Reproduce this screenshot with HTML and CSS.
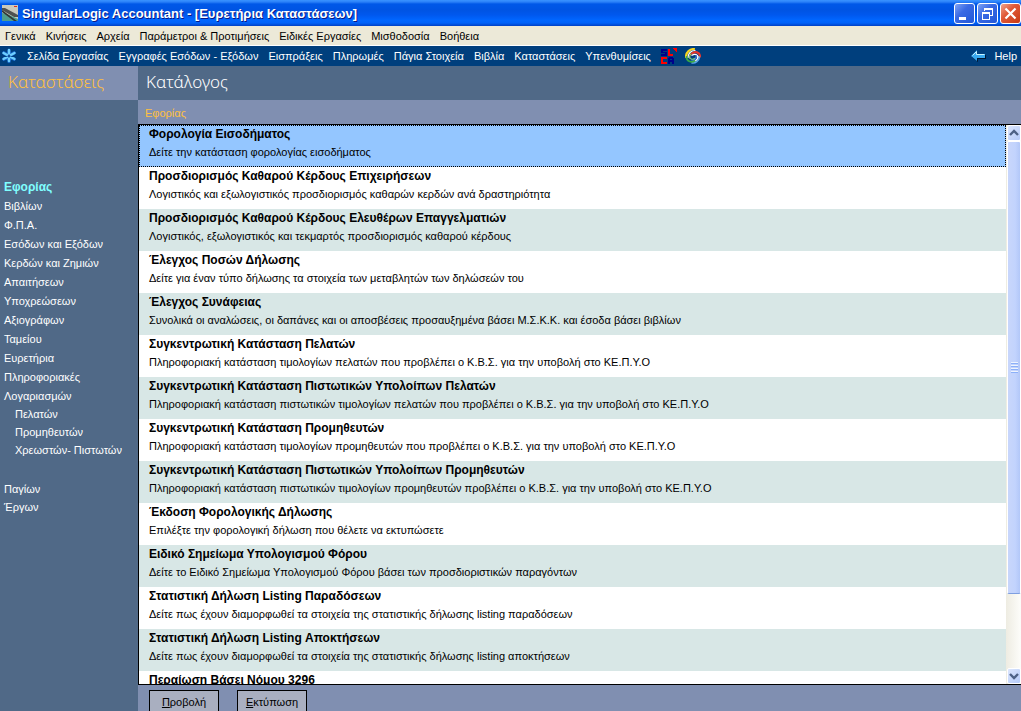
FILE: index.html
```html
<!DOCTYPE html>
<html lang="el">
<head>
<meta charset="utf-8">
<title>SingularLogic Accountant - [Ευρετήρια Καταστάσεων]</title>
<link rel="stylesheet" href="styles.css">
</head>
<body>
<div class="window">
  <header class="titlebar">
    <svg class="app-icon" viewBox="0 0 16 16" aria-hidden="true">
      <rect width="16" height="16" fill="#c9c9bd"/>
      <path d="M0 3h3l13 7v2H12L0 5z" fill="#4f5250"/>
      <path d="M0 8l5 1 11 5v2H0z" fill="#4f9d8e"/>
      <path d="M0 5l15 11h-3L0 7z" fill="#343836"/>
      <path d="M12 1h3v1h-3z" fill="#e02a20"/>
    </svg>
    <h1 class="title">SingularLogic Accountant - [Ευρετήρια Καταστάσεων]</h1>
    <div class="window-buttons">
      <button class="wbtn" type="button" aria-label="Ελαχιστοποίηση"><svg viewBox="0 0 19 19"><path d="M4 13h7v3H4z" fill="#fff"/></svg></button>
      <button class="wbtn" type="button" aria-label="Επαναφορά"><svg viewBox="0 0 19 19"><path d="M6 4h9v8h-3v-1h2V6H7v1H6z" fill="#fff"/><path d="M4 8h8v8H4zm1 2v5h6v-5z" fill="#fff" fill-rule="evenodd"/></svg></button>
      <button class="wbtn wbtn-close" type="button" aria-label="Κλείσιμο"><svg viewBox="0 0 19 19"><path d="M4.500 4.500l10 10M14.500 4.500l-10 10" stroke="#fff" stroke-width="2.200"/></svg></button>
    </div>
  </header>
  <nav class="menubar" aria-label="Μενού">
    <button type="button">Γενικά</button>
    <button type="button">Κινήσεις</button>
    <button type="button">Αρχεία</button>
    <button type="button">Παράμετροι &amp; Προτιμήσεις</button>
    <button type="button">Ειδικές Εργασίες</button>
    <button type="button">Μισθοδοσία</button>
    <button type="button">Βοήθεια</button>
  </nav>
  <nav class="toolbar" aria-label="Εργαλεία">
    <svg class="star" viewBox="0 0 16 16" aria-hidden="true">
      <g stroke-linecap="round"><path d="M8 2.500v11M3 5l10 6M3 11l10-6" stroke="#1565c8" stroke-width="3.600"/><path d="M8 2v11M2.500 5l11 6M2.500 11l11-6" stroke="#6fd0ff" stroke-width="2.400"/></g>
      <path d="M7.300 6.600h1.400l.8 1.400-.8 1.400H7.300L6.500 8z" fill="#12509c"/>
    </svg>
    <a href="#">Σελίδα Εργασίας</a>
    <a href="#">Εγγραφές Εσόδων - Εξόδων</a>
    <a href="#">Εισπράξεις</a>
    <a href="#">Πληρωμές</a>
    <a href="#">Πάγια Στοιχεία</a>
    <a href="#">Βιβλία</a>
    <a href="#">Καταστάσεις</a>
    <a href="#">Υπενθυμίσεις</a>
    <div class="tools">
      <button class="tool" type="button" aria-label="SLCA">
        <svg viewBox="0 0 16 16" shape-rendering="crispEdges"><path d="M0 1h6v2H2v1h4v4H0V6h4V5H0z" fill="#00008b"/><path d="M7 1h2v5h3v2H7z" fill="#f00"/><path d="M0 9h6v2H2v3h4v2H0z" fill="#f00"/><path d="M7 16v-6h1V9h4v1h1v6h-2v-2H9v2zM9 11h2v1H9z" fill="#00008b" fill-rule="evenodd"/><path d="M12 0h4v4h-1V3h-1V2h-1V1h-1z" fill="#f00"/></svg>
      </button>
      <button class="tool" type="button" aria-label="Swirl">
        <svg viewBox="0 0 16 16"><g fill="none" stroke-linecap="round">
          <path d="M1 9C1 4 5 1 9 1" stroke="#f6d51f" stroke-width="2.200"/><path d="M3 9.500c0-4 3-7 7-7" stroke="#fff" stroke-width="1.200"/><path d="M4.500 10c0-3 2-5.500 5.500-6" stroke="#b7c93a" stroke-width="1.200"/>
          <path d="M7 5.500c3-2.500 8-1.500 8 3" stroke="#e5352b" stroke-width="2.200"/><path d="M7 7.300c3-2 6-.5 6 2" stroke="#fff" stroke-width="1.200"/>
          <path d="M14.500 9c-.5 4-4 6.500-7.500 6" stroke="#58a5e8" stroke-width="1.600"/><path d="M13 8.500c0 3-3 5.500-6 5" stroke="#fff" stroke-width="1.200"/><path d="M11.300 8c0 3-2 4.500-4.500 4" stroke="#3b74d8" stroke-width="1.500"/>
          <path d="M9.500 13C6 15 1.500 13 1.500 9" stroke="#39a845" stroke-width="1.800"/><path d="M9.500 10.500c-2 1.500-5 .5-5-2" stroke="#7ecf7e" stroke-width="1.200"/></g></svg>
      </button>
    </div>
    <a class="help" href="#"><svg viewBox="0 0 15 12" aria-hidden="true"><path d="M1 7l6 5V9h8V5z" fill="#001630"/><path d="M0 6l6-6v4h8v4H6v3z" fill="#39a9f0"/><path d="M1.500 5.500L5.500 1.500v3h8" fill="none" stroke="#c8f4ff"/></svg>Help</a>
  </nav>
  <div class="workspace">
    <aside class="sidebar">
      <h2 class="heading sidebar-heading">Καταστάσεις</h2>
      <nav class="side-nav" aria-label="Καταστάσεις">
        <ul>
          <li><a class="current" href="#" aria-current="page">Εφορίας</a></li>
          <li><a href="#">Βιβλίων</a></li>
          <li><a href="#">Φ.Π.Α.</a></li>
          <li><a href="#">Εσόδων και Εξόδων</a></li>
          <li><a href="#">Κερδών και Ζημιών</a></li>
          <li><a href="#">Απαιτήσεων</a></li>
          <li><a href="#">Υποχρεώσεων</a></li>
          <li><a href="#">Αξιογράφων</a></li>
          <li><a href="#">Ταμείου</a></li>
          <li><a href="#">Ευρετήρια</a></li>
          <li><a href="#">Πληροφοριακές</a></li>
        </ul>
        <ul class="tight">
          <li><a href="#">Λογαριασμών</a>
            <ul class="nested">
              <li><a href="#">Πελατών</a></li>
              <li><a href="#">Προμηθευτών</a></li>
              <li><a href="#">Χρεωστών- Πιστωτών</a></li>
            </ul>
          </li>
        </ul>
        <ul class="tight last">
          <li><a href="#">Παγίων</a></li>
          <li><a href="#">Έργων</a></li>
        </ul>
      </nav>
    </aside>
    <main class="content">
      <h2 class="heading content-heading">Κατάλογος</h2>
      <h3 class="subheading">Εφορίας</h3>
      <div class="list-frame">
        <ul class="list" role="listbox" aria-label="Εφορίας">
          <li class="row selected" role="option" aria-selected="true"><strong>Φορολογία Εισοδήματος</strong><span>Δείτε την κατάσταση φορολογίας εισοδήματος</span></li>
          <li class="row" role="option"><strong>Προσδιορισμός Καθαρού Κέρδους Επιχειρήσεων</strong><span>Λογιστικός και εξωλογιστικός προσδιορισμός καθαρών κερδών ανά δραστηριότητα</span></li>
          <li class="row" role="option"><strong>Προσδιορισμός Καθαρού Κέρδους Ελευθέρων Επαγγελματιών</strong><span>Λογιστικός, εξωλογιστικός και τεκμαρτός προσδιορισμός καθαρού κέρδους</span></li>
          <li class="row" role="option"><strong>Έλεγχος Ποσών Δήλωσης</strong><span>Δείτε για έναν τύπο δήλωσης τα στοιχεία των μεταβλητών των δηλώσεών του</span></li>
          <li class="row" role="option"><strong>Έλεγχος Συνάφειας</strong><span>Συνολικά οι αναλώσεις, οι δαπάνες και οι αποσβέσεις προσαυξημένα βάσει Μ.Σ.Κ.Κ. και έσοδα βάσει βιβλίων</span></li>
          <li class="row" role="option"><strong>Συγκεντρωτική Κατάσταση Πελατών</strong><span>Πληροφοριακή κατάσταση τιμολογίων πελατών που προβλέπει ο Κ.Β.Σ. για την υποβολή στο ΚΕ.Π.Υ.Ο</span></li>
          <li class="row" role="option"><strong>Συγκεντρωτική Κατάσταση Πιστωτικών Υπολοίπων Πελατών</strong><span>Πληροφοριακή κατάσταση πιστωτικών τιμολογίων πελατών που προβλέπει ο Κ.Β.Σ. για την υποβολή στο ΚΕ.Π.Υ.Ο</span></li>
          <li class="row" role="option"><strong>Συγκεντρωτική Κατάσταση Προμηθευτών</strong><span>Πληροφοριακή κατάσταση τιμολογίων προμηθευτών που προβλέπει ο Κ.Β.Σ. για την υποβολή στο ΚΕ.Π.Υ.Ο</span></li>
          <li class="row" role="option"><strong>Συγκεντρωτική Κατάσταση Πιστωτικών Υπολοίπων Προμηθευτών</strong><span>Πληροφοριακή κατάσταση πιστωτικών τιμολογίων προμηθευτών προβλέπει ο Κ.Β.Σ. για την υποβολή στο ΚΕ.Π.Υ.Ο</span></li>
          <li class="row" role="option"><strong>Έκδοση Φορολογικής Δήλωσης</strong><span>Επιλέξτε την φορολογική δήλωση που θέλετε να εκτυπώσετε</span></li>
          <li class="row" role="option"><strong>Ειδικό Σημείωμα Υπολογισμού Φόρου</strong><span>Δείτε το Ειδικό Σημείωμα Υπολογισμού Φόρου βάσει των προσδιοριστικών παραγόντων</span></li>
          <li class="row" role="option"><strong>Στατιστική Δήλωση Listing Παραδόσεων</strong><span>Δείτε πως έχουν διαμορφωθεί τα στοιχεία της στατιστικής δήλωσης listing παραδόσεων</span></li>
          <li class="row" role="option"><strong>Στατιστική Δήλωση Listing Αποκτήσεων</strong><span>Δείτε πως έχουν διαμορφωθεί τα στοιχεία της στατιστικής δήλωσης listing αποκτήσεων</span></li>
          <li class="row" role="option"><strong>Περαίωση Βάσει Νόμου 3296</strong></li>
        </ul>
        <div class="scrollbar">
          <button class="scroll-btn" type="button" aria-label="Πάνω"><svg viewBox="0 0 12 14"><path d="M2 9l4-4 4 4" fill="none" stroke="#4d6185" stroke-width="2.400"/></svg></button>
          <div class="track"><div class="thumb"><i></i><i></i><i></i><i></i></div></div>
          <button class="scroll-btn" type="button" aria-label="Κάτω"><svg viewBox="0 0 12 14"><path d="M2 5l4 4 4-4" fill="none" stroke="#4d6185" stroke-width="2.400"/></svg></button>
        </div>
      </div>
      <footer class="actions">
        <button type="button"><u>Π</u>ροβολή</button>
        <button type="button"><u>Ε</u>κτύπωση</button>
      </footer>
    </main>
  </div>
</div>
</body>
</html>
```
FILE: styles.css
```css
* { box-sizing: border-box; }
body {
  margin: 0;
  font-family: "Liberation Sans", Arial, sans-serif;
  font-size: 11px;
  color: #000;
}
button { font: inherit; color: inherit; padding: 0; border: 0; background: none; }
a { color: inherit; text-decoration: none; }
ul { list-style: none; margin: 0; padding: 0; }
h1, h2, h3 { margin: 0; font-weight: normal; }
svg { display: block; }

.window { display: flex; flex-direction: column; height: 100vh; overflow: hidden; }

.titlebar {
  flex: none;
  display: flex;
  align-items: center;
  gap: 4px;
  height: 26px;
  padding-left: 2px;
  background: linear-gradient(#3a93ff 0, #2a80f8 2px, #0058e8 4px, #0054e3 10px, #0058ee 15px, #0066ff 20px, #0062f8 23px, #0040c4 26px);
}
.app-icon { width: 16px; height: 16px; }
.title { flex: 1; font-size: 13px; font-weight: bold; color: #fff; text-shadow: 1px 1px #0a1883; white-space: nowrap; }
.window-buttons { display: flex; gap: 2px; }
.wbtn {
  width: 21px;
  height: 21px;
  border: 1px solid #fff;
  border-radius: 3px;
  background: linear-gradient(135deg, #7ea3f5, #3a6ae4 40%, #2257d8);
}
.wbtn svg { width: 19px; height: 19px; }
.wbtn-close { background: linear-gradient(135deg, #f0a38c, #e05a38 40%, #c83a14); }

.menubar {
  flex: none;
  display: flex;
  align-items: center;
  gap: 10px;
  height: 20px;
  padding-left: 5px;
  background: #ece9d8;
  border-bottom: 1px solid #fff;
}
.toolbar {
  flex: none;
  display: flex;
  align-items: center;
  gap: 10px;
  height: 20px;
  padding: 0 4px 0 1px;
  background: #003f7d;
  color: #fff;
  white-space: nowrap;
}
.star { width: 16px; height: 16px; }
.tools { display: flex; gap: 8px; }
.tool svg { width: 16px; height: 16px; }
.help { display: flex; align-items: center; gap: 8px; margin-left: auto; }
.help svg { width: 15px; height: 12px; }

.workspace { flex: 1; display: flex; min-height: 0; }
.sidebar { flex: none; width: 138px; background: #506987; color: #fff; }
.heading { height: 34px; font-family: "Noto Sans", sans-serif; font-size: 17px; line-height: 32px; font-weight: 300; }
.sidebar-heading { padding-left: 8px; background: #808fb1; color: #ffc040; }
.side-nav { padding: 78px 0 0 4px; line-height: 19px; white-space: nowrap; }
.tight { line-height: 18px; }
.last { padding-top: 21px; }
.nested { padding-left: 11px; }
.current { color: #80ffff; font-size: 12px; font-weight: bold; }

.content { flex: 1; display: flex; flex-direction: column; min-width: 0; background: #808fb1; }
.content-heading { flex: none; padding-left: 8px; background: #506987; color: #fff; }
.subheading { flex: none; height: 24px; padding-left: 7px; font-size: 11px; line-height: 26px; color: #ffc040; }
.list-frame {
  flex: 1;
  display: flex;
  min-height: 0;
  background: #fff;
  border: solid #000;
  border-width: 1px 0 1px 1px;
}
.list { flex: 1; overflow: hidden; }
.row { height: 42px; padding: 0 10px; line-height: 18px; white-space: nowrap; }
.row:nth-child(odd) { background: #d8e7e6; }
.row strong, .row span { display: block; }
.row strong { font-size: 12px; }
.row.selected { background: #94c6ff; outline: 1px dotted #000; outline-offset: -1px; }

.scrollbar { flex: none; display: flex; flex-direction: column; width: 15px; padding-left: 1px; background: linear-gradient(90deg, #eeece2, #fdfdfa); }
.scroll-btn { flex: none; height: 16px; border: 1px solid #fff; border-radius: 2px; background: linear-gradient(135deg, #dce6fd, #b4caf8); }
.scroll-btn svg { width: 12px; height: 14px; }
.track { flex: 1; }
.thumb {
  display: flex;
  flex-direction: column;
  align-items: center;
  justify-content: center;
  gap: 2px;
  height: 86%;
  border: 1px solid #fff;
  border-bottom-color: #7f9fe0;
  border-radius: 2px;
  background: linear-gradient(90deg, #c8d6fb, #c2d3fd 60%, #b2c7f8);
}
.thumb i { width: 7px; height: 1px; background: #8cb0f8; box-shadow: 0 -1px #eef4fe; }

.actions { flex: none; display: flex; gap: 18px; height: 26px; padding: 5px 0 0 11px; overflow: hidden; }
.actions button { width: 70px; height: 24px; border: 1px solid #000; background: #a9afc0; }
```
